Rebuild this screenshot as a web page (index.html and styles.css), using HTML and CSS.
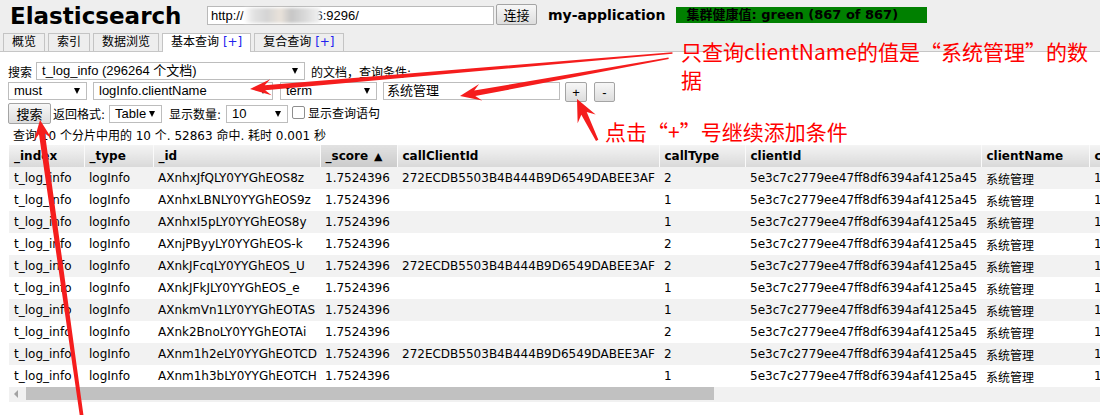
FILE: index.html
```html
<!DOCTYPE html>
<html lang="zh-CN">
<head>
<meta charset="utf-8">
<title>Elasticsearch</title>
<link rel="stylesheet" href="styles.css">
</head>
<body>
<div class="header">
  <div class="topbar">
    <h1 class="title">Elasticsearch</h1>
    <div class="url">http://<span class="blur"></span>6:9296/</div>
    <div class="btn connect">连接</div>
    <div class="app">my-application</div>
    <div class="health">集群健康值: green (867 of 867)</div>
  </div>
  <div class="tabs">
    <div class="tab">概览</div>
    <div class="tab">索引</div>
    <div class="tab">数据浏览</div>
    <div class="tab active">基本查询 <span class="plus">[+]</span></div>
    <div class="tab">复合查询 <span class="plus">[+]</span></div>
  </div>
</div>

<div class="main">
  <div class="row r1">
    <span class="lbl">搜索</span>
    <div class="sel w-index">t_log_info (296264 个文档)</div>
    <span class="after-index">的文档，查询条件:</span>
  </div>
  <div class="row r2">
    <div class="sel w-must">must</div>
    <div class="sel w-field">logInfo.clientName</div>
    <div class="sel w-term">term</div>
    <div class="txt w-value">系统管理</div>
    <div class="btn small add">+</div>
    <div class="btn small remove">-</div>
  </div>
  <div class="row r3">
    <div class="btn search">搜索</div>
    <span class="lbl fmt">返回格式:</span>
    <div class="sel w-table">Table</div>
    <span class="lbl cnt">显示数量:</span>
    <div class="sel w-size">10</div>
    <span class="chk"></span>
    <span class="lbl showq">显示查询语句</span>
  </div>
  <div class="info">查询 10 个分片中用的 10 个. 52863 命中. 耗时 0.001 秒</div>

  <div class="grid">
    <table class="results">
      <colgroup>
        <col class="c-index"><col class="c-type"><col class="c-id"><col class="c-score"><col class="c-cci"><col class="c-ct"><col class="c-cid"><col class="c-cname"><col class="c-last">
      </colgroup>
      <thead>
        <tr><th>_index</th><th>_type</th><th>_id</th><th class="sorted">_score<span class="tri">▲</span></th><th>callClientId</th><th>callType</th><th>clientId</th><th>clientName</th><th>createTime</th></tr>
      </thead>
      <tbody>
        <tr><td>t_log_info</td><td>logInfo</td><td>AXnhxJfQLY0YYGhEOS8z</td><td>1.7524396</td><td>272ECDB5503B4B444B9D6549DABEE3AF</td><td>2</td><td>5e3c7c2779ee47ff8df6394af4125a45</td><td class="cn">系统管理</td><td>1585650212000</td></tr>
        <tr><td>t_log_info</td><td>logInfo</td><td>AXnhxLBNLY0YYGhEOS9z</td><td>1.7524396</td><td></td><td>1</td><td>5e3c7c2779ee47ff8df6394af4125a45</td><td class="cn">系统管理</td><td>1585650212000</td></tr>
        <tr><td>t_log_info</td><td>logInfo</td><td>AXnhxI5pLY0YYGhEOS8y</td><td>1.7524396</td><td></td><td>1</td><td>5e3c7c2779ee47ff8df6394af4125a45</td><td class="cn">系统管理</td><td>1585650212000</td></tr>
        <tr><td>t_log_info</td><td>logInfo</td><td>AXnjPByyLY0YYGhEOS-k</td><td>1.7524396</td><td></td><td>2</td><td>5e3c7c2779ee47ff8df6394af4125a45</td><td class="cn">系统管理</td><td>1585650212000</td></tr>
        <tr><td>t_log_info</td><td>logInfo</td><td>AXnkJFcqLY0YYGhEOS_U</td><td>1.7524396</td><td>272ECDB5503B4B444B9D6549DABEE3AF</td><td>2</td><td>5e3c7c2779ee47ff8df6394af4125a45</td><td class="cn">系统管理</td><td>1585650212000</td></tr>
        <tr><td>t_log_info</td><td>logInfo</td><td>AXnkJFkJLY0YYGhEOS_e</td><td>1.7524396</td><td></td><td>1</td><td>5e3c7c2779ee47ff8df6394af4125a45</td><td class="cn">系统管理</td><td>1585650212000</td></tr>
        <tr><td>t_log_info</td><td>logInfo</td><td>AXnkmVn1LY0YYGhEOTAS</td><td>1.7524396</td><td></td><td>1</td><td>5e3c7c2779ee47ff8df6394af4125a45</td><td class="cn">系统管理</td><td>1585650212000</td></tr>
        <tr><td>t_log_info</td><td>logInfo</td><td>AXnk2BnoLY0YYGhEOTAi</td><td>1.7524396</td><td></td><td>2</td><td>5e3c7c2779ee47ff8df6394af4125a45</td><td class="cn">系统管理</td><td>1585650212000</td></tr>
        <tr><td>t_log_info</td><td>logInfo</td><td>AXnm1h2eLY0YYGhEOTCD</td><td>1.7524396</td><td>272ECDB5503B4B444B9D6549DABEE3AF</td><td>2</td><td>5e3c7c2779ee47ff8df6394af4125a45</td><td class="cn">系统管理</td><td>1585650212000</td></tr>
        <tr><td>t_log_info</td><td>logInfo</td><td>AXnm1h3bLY0YYGhEOTCH</td><td>1.7524396</td><td></td><td>1</td><td>5e3c7c2779ee47ff8df6394af4125a45</td><td class="cn">系统管理</td><td>1585650212000</td></tr>
      </tbody>
    </table>
    <div class="hscroll"><span class="sarrow"></span><span class="thumb"></span></div>
  </div>
</div>

<div class="annot">
  <svg class="arrows" width="1100" height="415" viewBox="0 0 1100 415">
    <g fill="#f51d1d">
      <polygon transform="translate(250 89) rotate(175.12)" points="0,0 -21,-8 -15,-2.6 -424,-0.8 -424,0.8 -15,2.6 -21,8"/>
      <polygon transform="translate(460 96) rotate(169.73)" points="0,0 -21,-8.5 -15,-2.8 -212,-0.8 -212,0.8 -15,2.8 -21,8.5"/>
      <polygon transform="translate(577 99) rotate(-116)" points="0,0 -22,-10 -16,-3 -46,-1.3 -46,1.3 -16,3 -22,10"/>
      <polygon transform="translate(40 120) rotate(-98.02)" points="0,0 -20,-9 -14,-3 -310,-1.8 -310,1.8 -14,3 -20,9"/>
    </g>
  </svg>
  <div class="note n1">只查询clientName的值是“系统管理”的数<br>据</div>
  <div class="note n2">点击“+”号继续添加条件</div>
</div>
</body>
</html>
```

FILE: styles.css
```css
* { box-sizing: border-box; }

body {
  margin: 0;
  width: 1100px;
  height: 415px;
  overflow: hidden;
  position: relative;
  background: #fff;
  color: #000;
  font-family: "DejaVu Sans", "Noto Sans CJK SC", sans-serif;
  font-size: 12px;
}

/* ---------- header ---------- */
.header {
  background: #eeeeee;
  border-bottom: 1px solid #c6c6c6;
  height: 52px;
}

.topbar {
  display: flex;
  align-items: flex-start;
  height: 33px;
  padding-left: 10px;
}

.title {
  margin: 0;
  width: 197px;
  font-size: 23px;
  font-weight: bold;
  line-height: 33px;
}

.url {
  margin-top: 6px;
  width: 287px;
  height: 19px;
  border: 1px solid #b9b9b9;
  background: #fff;
  padding: 0 3px;
  display: flex;
  align-items: center;
  font-family: "Liberation Sans", sans-serif;
  font-size: 13px;
}

.blur {
  display: inline-block;
  width: 76px;
  height: 15px;
  margin-right: -4px;
  background: linear-gradient(90deg, #fff 0%, #e3e3e3 12%, #d4d4d4 30%, #e9e2da 48%, #c6c6c6 62%, #d9d9d9 80%, #f2f2f2 100%);
  filter: blur(1.5px);
}

.btn {
  display: flex;
  align-items: center;
  justify-content: center;
  background: linear-gradient(#f7f7f7, #dddddd);
  border: 1px solid #a4a4a4;
  border-radius: 2px;
  font-family: "Liberation Sans", "Noto Sans CJK SC", sans-serif;
  font-size: 13px;
  color: #000;
}

.connect {
  margin-top: 4px;
  margin-left: 2px;
  width: 41px;
  height: 21px;
}

.app {
  margin-left: 11px;
  font-size: 14px;
  font-weight: bold;
  line-height: 31px;
}

.health {
  margin-left: 11px;
  margin-top: 7px;
  width: 251px;
  height: 16px;
  background: #008000;
  padding-left: 10px;
  font-size: 13px;
  font-weight: bold;
  line-height: 16px;
  white-space: nowrap;
}

.tabs {
  display: flex;
  gap: 3px;
  padding-left: 3px;
  height: 18px;
}

.tab {
  height: 18px;
  padding: 0 8px;
  border: 1px solid #c4c4c4;
  border-bottom: none;
  background: #eeeeee;
  line-height: 17px;
  white-space: nowrap;
}

.tab.active {
  height: 19px;
  background: #fff;
}

.plus { color: #2222ee; }

/* ---------- query form ---------- */
.main { padding: 10px 0 0 8px; }

.row {
  display: flex;
  align-items: center;
  white-space: nowrap;
}

.r1 { height: 18px; }
.r2 { height: 20px; margin-top: 2px; align-items: flex-start; }
.r3 { height: 21px; margin-top: 1px; }

.lbl { margin-right: 4px; }
.after-index { margin-left: 6px; }

.sel, .txt {
  position: relative;
  height: 18px;
  border: 1px solid #bdbdbd;
  background: #fff;
  padding-left: 5px;
  font-family: "Liberation Sans", "Noto Sans CJK SC", sans-serif;
  font-size: 13px;
  line-height: 16px;
  white-space: nowrap;
}

.sel::after {
  content: "";
  position: absolute;
  right: 6px;
  top: 5px;
  border-left: 3.5px solid transparent;
  border-right: 3.5px solid transparent;
  border-top: 6px solid #000;
}

.txt { padding-left: 3px; }

.w-index { width: 269px; }
.w-must { width: 79px; }
.w-field { width: 180px; margin-left: 6px; }
.w-term { width: 97px; margin-left: 7px; }
.w-value { width: 177px; margin-left: 6px; }

.small { width: 22px; height: 20px; }
.add { margin-left: 5px; }
.remove { margin-left: 7px; width: 21px; }

.search { width: 43px; height: 21px; }
.fmt { margin-left: 2px; margin-right: 4px; }
.w-table { width: 53px; }
.cnt { margin-left: 7px; margin-right: 5px; }
.w-size { width: 62px; }

.chk {
  width: 13px;
  height: 13px;
  margin-left: 4px;
  margin-top: -3px;
  border: 1px solid #8e8e8e;
  border-radius: 2px;
  background: #fff;
}

.showq { margin-left: 3px; margin-top: -3px; }

.info {
  margin-top: 3px;
  height: 18px;
  line-height: 19px;
  padding-left: 5px;
  white-space: nowrap;
}

/* ---------- results ---------- */
.grid {
  margin-left: 1px;
  width: 1091px;
  overflow: hidden;
}

.results {
  border-collapse: collapse;
  table-layout: fixed;
  width: 1180px;
}

.c-index { width: 75px; }
.c-type { width: 69px; }
.c-id { width: 167px; }
.c-score { width: 77px; }
.c-cci { width: 262px; }
.c-ct { width: 86px; }
.c-cid { width: 236px; }
.c-cname { width: 108px; }
.c-last { width: 100px; }

.results th,
.results td {
  height: 22px;
  padding: 0 4px 0 5px;
  text-align: left;
  white-space: nowrap;
  overflow: hidden;
}

.results th {
  font-weight: bold;
  background: linear-gradient(#f4f4f4, #d9d9d9);
  border-right: 1px solid #fafafa;
}

.results th.sorted { background: linear-gradient(#e2e2e2, #cbcbcb); }

.tri {
  margin-left: 6px;
  font-size: 11px;
}

.results tbody tr:nth-child(odd) td { background: #f2f2f2; }

.results td.cn { font-size: 12px; }

.hscroll {
  height: 15px;
  background: #f1f1f1;
  display: flex;
  align-items: flex-start;
}

.sarrow {
  width: 0;
  height: 0;
  margin-left: 5px;
  margin-top: 3px;
  border-top: 4px solid transparent;
  border-bottom: 4px solid transparent;
  border-right: 4px solid #a3a3a3;
}

.thumb {
  margin-left: 8px;
  width: 688px;
  height: 13px;
  background: #c1c1c1;
}

/* ---------- annotations drawn over the page ---------- */
.annot {
  position: absolute;
  left: 0;
  top: 0;
  width: 1100px;
  height: 415px;
  pointer-events: none;
}

.arrows {
  position: absolute;
  left: 0;
  top: 0;
}

.note {
  position: absolute;
  color: #ff0000;
  font-family: "Noto Sans CJK SC", sans-serif;
  font-size: 21px;
  line-height: 28px;
  white-space: nowrap;
}

.n1 { left: 681px; top: 37px; }
.n2 { left: 605px; top: 117px; }
```
